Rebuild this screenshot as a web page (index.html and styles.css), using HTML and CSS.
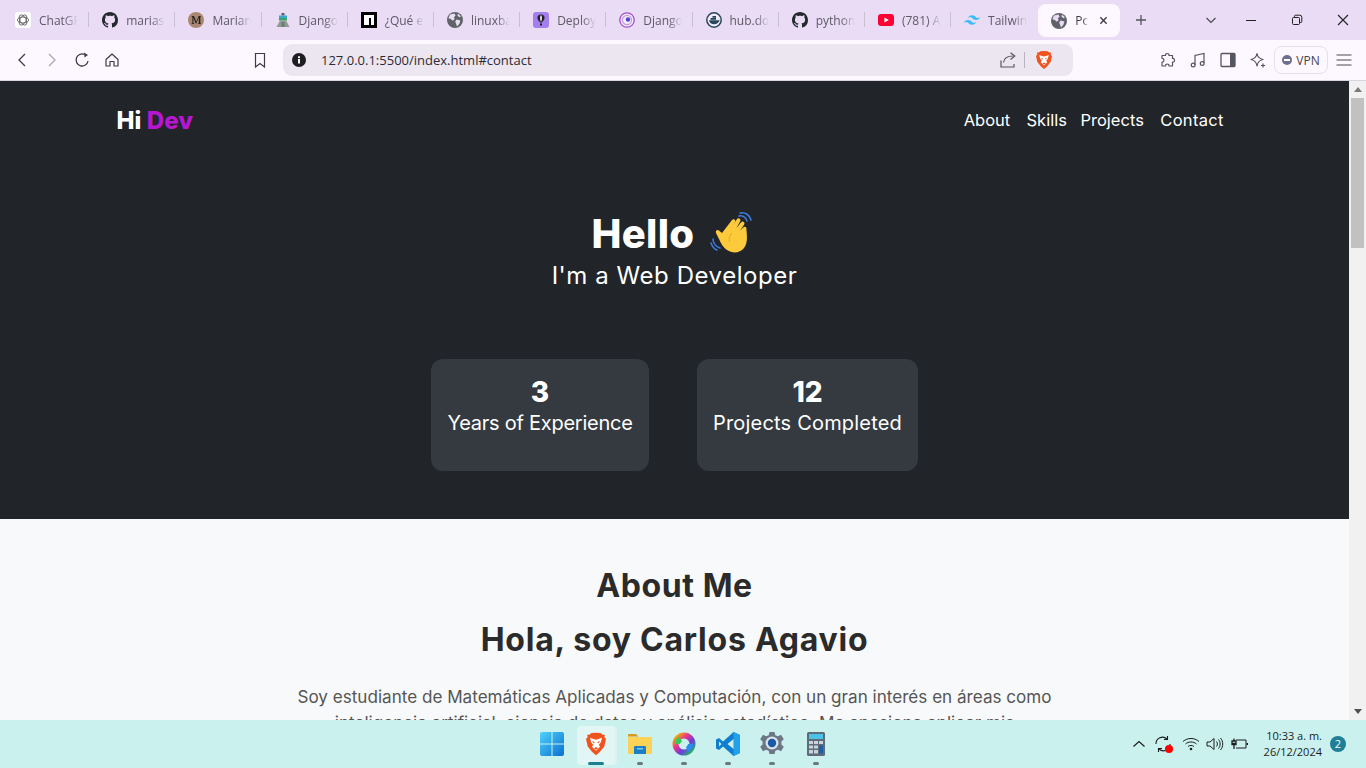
FILE: index.html
```html
<!DOCTYPE html>
<html lang="es">
<head>
<meta charset="utf-8">
<title>Portfolio</title>
<link rel="stylesheet" href="styles.css">
</head>
<body>
<svg class="defs" width="0" height="0" aria-hidden="true">
  <symbol id="gh" viewBox="0 0 16 16"><path d="M8 0C3.58 0 0 3.58 0 8c0 3.54 2.29 6.53 5.47 7.59.4.07.55-.17.55-.38 0-.19-.01-.82-.01-1.49-2.01.37-2.53-.49-2.69-.94-.09-.23-.48-.94-.82-1.13-.28-.15-.68-.52-.01-.53.63-.01 1.08.58 1.23.82.72 1.21 1.87.87 2.33.66.07-.52.28-.87.51-1.07-1.78-.2-3.64-.89-3.64-3.95 0-.87.31-1.59.82-2.15-.08-.2-.36-1.02.08-2.12 0 0 .67-.21 2.2.82.64-.18 1.32-.27 2-.27s1.36.09 2 .27c1.53-1.04 2.2-.82 2.2-.82.44 1.1.16 1.92.08 2.12.51.56.82 1.27.82 2.15 0 3.07-1.87 3.75-3.65 3.95.29.25.54.73.54 1.48 0 1.07-.01 1.93-.01 2.2 0 .21.15.46.55.38A8.01 8.01 0 0 0 16 8c0-4.42-3.58-8-8-8z" fill="#24292f"/></symbol>
  <symbol id="globe" viewBox="0 0 16 16"><circle cx="8" cy="8" r="8" fill="#5f6368"/><path d="M3 2.6 7.4 1.6 8.6 3.6 6.8 5.4 7.8 7 5.8 8.8 3.8 7 1.4 6.2ZM9.6 7.6 13.4 8.4 12.4 11.8 10 14.4 9 11.4 8.2 9.4ZM11 1.6 14 4.4 12.4 5.2 10.4 3.6Z" fill="#e9dcf5"/></symbol>
  <symbol id="brave" viewBox="0 0 16 18"><path d="M8 0 11.6.2 13.4 1.6 15.2 1.6 14.6 3.4 16 5 14.6 11 11 15.4 8 18 5 15.4 1.4 11 0 5 1.4 3.4.8 1.6 2.6 1.6 4.4.2Z" fill="#f1531f"/><path d="M8 5.6 10 5 12.8 4 11.8 7.8 10.2 9.6 11.2 11.2 8 14.4 4.8 11.2 5.8 9.6 4.2 7.8 3.2 4 6 5Z" fill="#fff"/><path d="M6.4 12.4 8 11.4 9.6 12.4 8 13.6ZM4.8 6.6 7 7.4 6.2 8.6ZM11.2 6.6 9 7.4 9.8 8.6Z" fill="#f1531f"/></symbol>
</svg>

<header class="browser">
  <div class="tabstrip">
    <div class="tab tab-first"><svg class="fav" viewBox="0 0 16 16"><rect width="16" height="16" rx="3" fill="#fff"/><g fill="none" stroke="#555" stroke-width=".8"><ellipse cx="8" cy="8" rx="5.6" ry="3"/><ellipse cx="8" cy="8" rx="5.6" ry="3" transform="rotate(60 8 8)"/><ellipse cx="8" cy="8" rx="5.6" ry="3" transform="rotate(120 8 8)"/></g></svg><span class="tab-title">ChatGPT</span></div>
    <div class="tab"><svg class="fav"><use href="#gh"/></svg><span class="tab-title">mariasmith</span></div>
    <div class="tab"><svg class="fav" viewBox="0 0 16 16"><circle cx="8" cy="8" r="8" fill="#a98770"/><path d="M3.600 12h2.600v-.5l-.8-.3V5.600L8 12l2.800-6.600v5.800l-.8.3v.5h3v-.5l-.7-.3V4.800l.7-.3V4h-2.300L8.300 9.500 6 4H3.600v.5l.8.3v6.400l-.8.3z" fill="#222"/></svg><span class="tab-title">Mariana</span></div>
    <div class="tab"><svg class="fav" viewBox="0 0 16 16"><rect x="6.500" y="1" width="3" height="2.500" fill="#5a5f62"/><rect x="4" y="3.500" width="8" height="2.500" fill="#3fa6d0"/><rect x="4" y="6" width="8" height="2.500" fill="#35a36a"/><path d="M5 8.500h6l3.500 6.500h-13Z" fill="#8e9a94"/><rect x="6.500" y="10" width="3" height="5" fill="#6f7a75"/></svg><span class="tab-title">Django</span></div>
    <div class="tab"><svg class="fav" viewBox="0 0 16 16"><rect width="16" height="16" fill="#000"/><path d="M3 3h10v10H10V6H8v7H3Z" fill="#fff"/></svg><span class="tab-title">¿Qué es</span></div>
    <div class="tab"><svg class="fav"><use href="#globe"/></svg><span class="tab-title">linuxbabe</span></div>
    <div class="tab"><svg class="fav" viewBox="0 0 16 16"><rect width="16" height="16" rx="3" fill="#a47ef0"/><path d="M8 2.500c2.400 0 3.600 1.700 3.600 3.300 0 2-2 3.700-2.600 4.700H7c-.6-1-2.600-2.700-2.600-4.700 0-1.600 1.200-3.300 3.600-3.300Z" fill="#222"/><path d="M8 3c.7.8 1 1.800 1 3s-.4 2.500-1 4c-.6-1.500-1-2.800-1-4s.3-2.200 1-3Z" fill="#e9dcf5"/><rect x="7" y="11.500" width="2" height="2" fill="#222"/></svg><span class="tab-title">Deploy</span></div>
    <div class="tab"><svg class="fav" viewBox="0 0 16 16"><circle cx="8" cy="8" r="7.200" fill="#f4eefb" stroke="#a04fd0" stroke-width="1.300"/><circle cx="8" cy="8" r="4.600" fill="none" stroke="#c79be6" stroke-width="1.200"/><circle cx="9" cy="7.500" r="2.200" fill="#5a3fd8"/></svg><span class="tab-title">Django</span></div>
    <div class="tab"><svg class="fav" viewBox="0 0 16 16"><circle cx="8" cy="8" r="7.200" fill="#f2ecfa" stroke="#28475a" stroke-width="1.500"/><path d="M3 8.300h9.500c.6 0 1-.4 1.200-.8-.4 3-2.800 4.800-5.600 4.800-2.600 0-4.700-1.400-5.100-4Z" fill="#28475a"/><rect x="4.500" y="6" width="5.500" height="1.800" fill="#28475a"/><rect x="6.500" y="4" width="3.500" height="1.800" fill="#28475a"/></svg><span class="tab-title">hub.docker</span></div>
    <div class="tab"><svg class="fav"><use href="#gh"/></svg><span class="tab-title">python</span></div>
    <div class="tab"><svg class="fav" viewBox="0 0 16 16"><rect y="2" width="16" height="12" rx="3.200" fill="#ff0033"/><path d="M6.400 5.500 10.800 8l-4.400 2.500Z" fill="#fff"/></svg><span class="tab-title">(781) Anuel</span></div>
    <div class="tab"><svg class="fav" viewBox="0 0 24 24"><path fill="#38bdf8" d="M12 4.800c-3.200 0-5.200 1.600-6 4.800 1.200-1.600 2.600-2.200 4.200-1.800.913.228 1.565.89 2.288 1.624C13.666 10.618 15.027 12 18 12c3.200 0 5.200-1.600 6-4.800-1.200 1.600-2.600 2.200-4.200 1.800-.913-.228-1.565-.89-2.288-1.624C16.337 6.182 14.976 4.800 12 4.800zM6 12c-3.200 0-5.200 1.600-6 4.800 1.200-1.600 2.600-2.200 4.200-1.800.913.228 1.565.89 2.288 1.624 1.177 1.194 2.538 2.576 5.512 2.576 3.200 0 5.200-1.600 6-4.800-1.200 1.600-2.600 2.200-4.200 1.800-.913-.228-1.565-.89-2.288-1.624C10.337 13.382 8.976 12 6 12z"/></svg><span class="tab-title">Tailwind</span></div>
    <div class="tab tab-active"><svg class="fav"><use href="#globe"/></svg><span class="tab-title tab-title-short">Portfolio</span><svg class="tab-close" viewBox="0 0 10 10"><path d="M1.500 1.500l7 7M8.500 1.500l-7 7" stroke="#3c3c44" stroke-width="1.500" fill="none"/></svg></div>
    <svg class="new-tab" viewBox="0 0 12 12"><path d="M6 1v10M1 6h10" stroke="#55555f" stroke-width="1.300" fill="none"/></svg>
    <div class="win-controls">
      <svg class="win-icon chev" viewBox="0 0 12 12"><path d="M1.500 4 6 8.500 10.500 4" stroke="#4a4a52" stroke-width="1.200" fill="none"/></svg>
      <svg class="win-icon win-min" viewBox="0 0 12 12"><path d="M1 6.500h10" stroke="#222" stroke-width="1"/></svg>
      <svg class="win-icon" viewBox="0 0 12 12"><path d="M3.500 3.500V2.200q0-1 1-1h4.300q2 0 2 2v4.300q0 1-1 1H8.500M1.500 4.500q0-1 1-1h5q1 0 1 1v5q0 1-1 1h-5q-1 0-1-1Z" stroke="#222" stroke-width="1" fill="none"/></svg>
      <svg class="win-icon" viewBox="0 0 12 12"><path d="M1 1l10 10M11 1 1 11" stroke="#222" stroke-width="1.100" fill="none"/></svg>
    </div>
  </div>
  <div class="toolbar">
    <svg class="tool back" viewBox="0 0 16 16"><path d="M11 2 5 8l6 6" stroke="#3c3c44" stroke-width="1.300" fill="none"/></svg>
    <svg class="tool fwd" viewBox="0 0 16 16"><path d="M5 2l6 6-6 6" stroke="#a8a6ae" stroke-width="1.300" fill="none"/></svg>
    <svg class="tool reload" viewBox="0 0 16 16"><path d="M14 9A6 6 0 1 1 10.500 2.500" stroke="#3c3c44" stroke-width="1.300" fill="none"/><path d="M10 .5l4 2.500-3.500 2.500Z" fill="#3c3c44"/></svg>
    <svg class="tool home" viewBox="0 0 16 16"><path d="M2 7.500 8 2l6 5.500V14H10V9.500H6V14H2Z" stroke="#3c3c44" stroke-width="1.200" fill="none" stroke-linejoin="round"/></svg>
    <svg class="tool bookmark" viewBox="0 0 16 16"><path d="M3.500 1.500h9V15L8 11.500 3.500 15Z" stroke="#3c3c44" stroke-width="1.200" fill="none"/></svg>
    <div class="address">
      <svg class="info" viewBox="0 0 14 14"><circle cx="7" cy="7" r="7" fill="#1d1d22"/><rect x="6" y="6" width="2" height="4.500" fill="#fff"/><rect x="6" y="3.300" width="2" height="1.800" fill="#fff"/></svg>
      <span class="url">127.0.0.1:5500/index.html#contact</span>
      <svg class="share" viewBox="0 0 16 16"><path d="M1 8.500V15h13v-3M3.500 10.500C4 6 7.500 4 13 4" stroke="#55555f" stroke-width="1.200" fill="none"/><path d="M10.500.8 14.800 4 10.500 7.500" stroke="#55555f" stroke-width="1.200" fill="none"/></svg>
      <span class="addr-sep"></span>
      <svg class="brave-small"><use href="#brave"/></svg>
    </div>
    <svg class="tool ext" viewBox="0 0 16 16"><path d="M5.500 3.500C5 .8 9.500.8 9 3.500h3.500v3c2.700-.5 2.700 4 0 3.500v4H9c.5-2.700-4-2.700-3.500 0H2v-4c2.500.5 2.500-4 0-3.500v-3Z" stroke="#55555f" stroke-width="1.200" fill="none" stroke-linejoin="round"/></svg>
    <svg class="tool music" viewBox="0 0 16 16"><path d="M5 13V3.500L14 1.500V11" stroke="#55555f" stroke-width="1.200" fill="none"/><circle cx="3.200" cy="13" r="1.900" stroke="#55555f" stroke-width="1.200" fill="none"/><circle cx="12.200" cy="11.500" r="1.900" stroke="#55555f" stroke-width="1.200" fill="none"/></svg>
    <svg class="tool panel" viewBox="0 0 16 16"><rect x="1" y="1.500" width="14" height="13" rx="1" stroke="#55555f" stroke-width="1.300" fill="none"/><rect x="10" y="1.500" width="5" height="13" fill="#55555f"/></svg>
    <svg class="tool aria" viewBox="0 0 16 16"><path d="M7 1.500C7.500 5 9 6.500 13 7.500 9 8.500 7.500 10 7 14 6.500 10 5 8.500 1 7.500 5 6.500 6.500 5 7 1.500Z" stroke="#55555f" stroke-width="1.200" fill="none" stroke-linejoin="round"/><path d="M13 11.500v4M11 13.500h4" stroke="#55555f" stroke-width="1.200"/></svg>
    <div class="vpn"><span class="vpn-dot"></span><span>VPN</span></div>
    <svg class="tool menu" viewBox="0 0 16 16"><path d="M.5 3h15M.5 8h15M.5 13h15" stroke="#4a4a52" stroke-width="1.200"/></svg>
  </div>
</header>

<div class="viewport">
  <main class="page">
    <section class="hero">
      <nav class="navbar">
        <a class="logo">Hi <span class="logo-accent">Dev</span></a>
        <ul class="nav-links">
          <li>About</li><li>Skills</li><li>Projects</li><li>Contact</li>
        </ul>
      </nav>
      <div class="intro">
        <h1 class="hello"><span class="hello-text">Hello</span><svg class="wave" viewBox="0 0 44 44"><g fill="none" stroke="#3d7de0" stroke-width="1.500" stroke-linecap="round"><path d="M29 4c3-1 7 1 8 5"/><path d="M30 1c5-1 10 2 11 7"/><path d="M3 27c0 4 3 8 7 9"/><path d="M1 31c1 3 3 6 6 7"/></g><path d="M12 21 22 8c1.500-2 4.500 0 3 2l-3 5 5-8c1.500-2 4.500 0 3.200 2.200l-4 7 5-6c1.500-2 4.200.2 3 2.300l-4 6 3-3c1.500-1.800 4-.2 3.200 1.800C37 24 38 31 34 36c-4 5-11 6-17 2-3-2-6-6-8-11l-3-6c-1-2.400 2-4 3.500-2L12 21Z" fill="#fdca3c"/><path d="M22 21c-3 3-3.500 6-2 9" stroke="#e8a420" stroke-width="1" fill="none"/></svg></h1>
        <p class="tagline">I'm a Web Developer</p>
      </div>
      <div class="stats">
        <div class="stat stat-years"><strong class="stat-value">3</strong><span class="stat-label">Years of Experience</span></div>
        <div class="stat stat-projects"><strong class="stat-value">12</strong><span class="stat-label">Projects Completed</span></div>
      </div>
    </section>
    <section class="about">
      <h2 class="about-title">About Me</h2>
      <h3 class="about-name">Hola, soy Carlos Agavio</h3>
      <p class="about-text">Soy estudiante de Matemáticas Aplicadas y Computación, con un gran interés en áreas como<br>inteligencia artificial, ciencia de datos y análisis estadístico. Me apasiona aplicar mis</p>
    </section>
  </main>
  <div class="scrollbar">
    <span class="sb-arrow sb-up"></span>
    <div class="sb-track"><span class="sb-thumb"></span></div>
    <span class="sb-arrow sb-down"></span>
  </div>
</div>

<footer class="taskbar">
  <div class="task-spacer"></div>
  <div class="task-apps">
    <div class="app"><svg class="app-icon" viewBox="0 0 24 24"><defs><linearGradient id="w" x1="0" y1="0" x2="1" y2="1"><stop offset="0" stop-color="#4fd2fa"/><stop offset="1" stop-color="#0a6fd0"/></linearGradient></defs><path d="M0 2q0-2 2-2h9.500v11.500H0ZM12.500 0H22q2 0 2 2v9.500H12.500ZM0 12.500h11.500V24H2q-2 0-2-2ZM12.500 12.500H24V22q0 2-2 2h-9.500Z" fill="url(#w)"/></svg></div>
    <div class="app app-active"><svg class="app-icon brave-big"><use href="#brave"/></svg><span class="app-line"></span></div>
    <div class="app"><svg class="app-icon" viewBox="0 0 24 24"><path d="M0 3q0-1 1-1h7l2.500 2.500H0Z" fill="#d69a1c"/><path d="M0 5h24v16q0 1-1 1H1q-1 0-1-1Z" fill="#fcd257"/><path d="M7 14h10q1 0 1 1v7H6v-7q0-1 1-1Z" fill="#1a7fc4"/><rect x="9" y="16" width="6" height="1.500" fill="#7cc4ee"/></svg><span class="app-dot"></span></div>
    <div class="app"><svg class="app-icon" viewBox="0 0 24 24"><circle cx="12" cy="12" r="8.500" fill="none" stroke="url(#rb)" stroke-width="6"/><defs><linearGradient id="rb" x1="0" y1="0" x2="1" y2="1"><stop offset="0" stop-color="#f7b500"/><stop offset=".35" stop-color="#e8338c"/><stop offset=".65" stop-color="#6a3fe0"/><stop offset="1" stop-color="#1fbf5a"/></linearGradient></defs><path d="M3 12a9 9 0 0 1 4-7.500l3 5a4 4 0 0 0-2 2.500Z" fill="#2ecc55"/><path d="M21 12a9 9 0 0 1-5 8l-2-5a4 4 0 0 0 2-3Z" fill="#2b8cf0"/></svg><span class="app-dot"></span></div>
    <div class="app"><svg class="app-icon" viewBox="0 0 24 24"><path d="M17.500 0 24 3v18l-6.500 3L7 14.500 3 18l-3-1.500v-9L3 6l4 3.500Z" fill="#0e7fd0"/><path d="M17.500 0 24 3v18l-6.500 3Z" fill="#22a0ea"/><path d="M17.500 7 11.500 12l6 5ZM3 9.500v5L5.500 12Z" fill="#c9f0ee"/></svg><span class="app-dot"></span></div>
    <div class="app"><svg class="app-icon" viewBox="0 0 24 24"><path d="M9.500 0h5l.8 3.200 2.600 1.100L21 2.700l2.800 4.500-2.400 2.200v3.200l2.400 2.200-2.800 4.500-3.100-1.600-2.600 1.100-.8 3.200h-5l-.8-3.200-2.600-1.100L3 19.300.2 14.800l2.400-2.200V9.400L.2 7.200 3 2.700l3.100 1.600 2.600-1.100Z" fill="#6c7684"/><circle cx="12" cy="11" r="6.500" fill="#d8e4ea"/><circle cx="12" cy="11" r="4.200" fill="#1a5aa8"/></svg><span class="app-dot"></span></div>
    <div class="app"><svg class="app-icon" viewBox="0 0 24 24"><rect x="3" width="18" height="24" rx="1.500" fill="#5e6b78"/><rect x="5" y="2" width="14" height="5" fill="#4bc3e8"/><g fill="#c9d2da"><rect x="5" y="9" width="4" height="3"/><rect x="10" y="9" width="4" height="3"/><rect x="15" y="9" width="4" height="3"/><rect x="5" y="13.500" width="4" height="3"/><rect x="10" y="13.500" width="4" height="3"/><rect x="5" y="18" width="4" height="3.500"/><rect x="10" y="18" width="4" height="3.500"/></g><rect x="15" y="13.500" width="4" height="8" fill="#1f5ea8"/></svg><span class="app-dot"></span></div>
  </div>
  <div class="tray">
    <svg class="tray-chevron" viewBox="0 0 14 14"><path d="M1.500 9.500 7 4.500l5.500 5" stroke="#1d1d1d" stroke-width="1.200" fill="none"/></svg>
    <span class="sync">
      <svg class="tray-icon" viewBox="0 0 18 18"><path d="M2 9a6.500 6.500 0 0 1 11-5M16 9a6.500 6.500 0 0 1-11 5" stroke="#1d1d1d" stroke-width="1.100" fill="none"/><path d="M13.500 1v3.500H10M4.500 17v-3.500H8" stroke="#1d1d1d" stroke-width="1.100" fill="none"/></svg>
      <span class="sync-dot"></span>
    </span>
    <svg class="tray-icon wifi" viewBox="0 0 18 18"><g stroke="#1d1d1d" stroke-width="1" fill="none"><path d="M1 6.500c4.500-4 11.500-4 16 0"/><path d="M3.500 9c3-2.700 8-2.700 11 0"/><path d="M6 11.500c1.700-1.400 4.300-1.400 6 0"/></g><circle cx="9" cy="14" r="1.300" fill="#1d1d1d"/></svg>
    <svg class="tray-icon volume" viewBox="0 0 18 18"><path d="M1 7v4h3l4 3.500v-11L4 7Z" stroke="#1d1d1d" stroke-width="1" fill="none"/><path d="M10.500 6.500c1.200 1.500 1.200 3.500 0 5M12.500 4.500c2.200 2.600 2.200 6.400 0 9M14.500 3c3 3.500 3 8.500 0 12" stroke="#1d1d1d" stroke-width="1" fill="none"/></svg>
    <svg class="tray-icon plug" viewBox="0 0 18 18"><path d="M3 3.500v2.500M.5 8.500h5M1 6h4v3.500H1ZM3 9.500V14" stroke="#1d1d1d" stroke-width="1.300" fill="none"/><path d="M5 5h10v8H5" stroke="#1d1d1d" stroke-width="1" fill="none"/><rect x="15.500" y="8" width="1.500" height="2" fill="#1d1d1d"/></svg>
    <div class="clock"><span>10:33 a. m.</span><span>26/12/2024</span></div>
    <span class="badge">2</span>
  </div>
</footer>
</body>
</html>
```
FILE: styles.css
```css
* { box-sizing: border-box; margin: 0; padding: 0; }
html, body { width: 1366px; height: 768px; overflow: hidden; }
body { display: flex; flex-direction: column; font-family: "Inter", "Liberation Sans", sans-serif; background: #fff; }
.defs { position: absolute; }

.browser { flex: none; }
.tabstrip { height: 40px; background: #e9dcf4; display: flex; align-items: center; padding-left: 3px; }
.tab { width: 86.2px; height: 28px; display: flex; align-items: center; padding-left: 13px; position: relative; flex: none; }
.tab-first { padding-left: 12px; }
.tab::after { content: ""; position: absolute; right: 0; top: 6px; height: 15px; width: 1px; background: #c9bfd3; }
.tab:nth-child(12)::after { display: none; }
.fav { width: 16px; height: 16px; flex: none; }
.tab-title { margin-left: 8px; width: 39px; overflow: hidden; white-space: nowrap; font: 12px "Open Sans", sans-serif; color: #5d5a66;
  -webkit-mask-image: linear-gradient(90deg, #000 65%, transparent 100%); mask-image: linear-gradient(90deg, #000 65%, transparent 100%); }
.tab-active { width: 82px; height: 33px; margin-left: 1px; background: #fdf8ff; border-radius: 8px; padding-left: 13px; align-self: flex-end; margin-bottom: 3px; }
.tab-active::after { display: none; }
.tab-title-short { width: 13px; color: #3e3c46; flex: none; margin-right: 11px; }
.tab-close { width: 9px; height: 9px; flex: none; }
.new-tab { width: 12px; height: 12px; margin-left: 15px; flex: none; }
.win-controls { display: flex; align-items: center; margin-left: auto; }
.win-icon { width: 12px; height: 12px; margin-right: 34px; flex: none; }
.win-icon:last-child { margin-right: 17px; }
.win-icon.chev { margin-right: 28px; }
.win-icon.win-min { margin-right: 34px; }

.toolbar { height: 41px; background: #fdf8ff; border-bottom: 1px solid #d9d5de; display: flex; align-items: center; }
.tool { width: 16px; height: 16px; flex: none; }
.back { margin-left: 14px; }
.fwd { margin-left: 14px; }
.reload { margin-left: 14px; }
.home { margin-left: 14px; }
.bookmark { margin-left: 132px; }
.address { width: 790px; height: 32px; margin-left: 15px; background: #ece6f1; border-radius: 9px; display: flex; align-items: center; padding-left: 9px; flex: none; }
.info { width: 14px; height: 14px; flex: none; }
.url { margin-left: 15px; font: 13px "Open Sans", sans-serif; color: #2d2b35; white-space: nowrap; }
.share { width: 16px; height: 16px; margin-left: auto; flex: none; }
.addr-sep { width: 1px; height: 16px; background: #b8b3bf; margin-left: 8px; }
.brave-small { width: 16px; height: 18px; margin-left: 11px; margin-right: 21px; flex: none; }
.ext { margin-left: 87px; }
.music { margin-left: 14px; }
.panel { margin-left: 14px; }
.aria { margin-left: 14px; }
.vpn { width: 54px; height: 28px; margin-left: 8px; border: 1px solid #e4dfe8; border-radius: 8px; display: flex; align-items: center; justify-content: center; gap: 4px; font: 12px "Open Sans", sans-serif; color: #45434d; flex: none; }
.vpn-dot { width: 10px; height: 10px; border-radius: 50%; background: #6c6f8f; position: relative; }
.vpn-dot::after { content: ""; position: absolute; left: 2px; right: 2px; top: 4px; height: 2px; background: #fff; }
.menu { margin-left: 8px; }

.viewport { flex: 1; min-height: 0; display: flex; overflow: hidden; }
.page { flex: 1; min-width: 0; overflow: hidden; background: #f8f9fa; }
.hero { height: 438px; background: #212529; color: #fff; }
.navbar { width: 1116px; margin: 0 auto; height: 78px; display: flex; align-items: center; justify-content: space-between; }
.logo { font-size: 24px; font-weight: 800; color: #fff; letter-spacing: .1px; }
.logo-accent { color: #b916d2; }
.nav-links { display: grid; grid-template-columns: 47px 38px 63px 65px; gap: 16px; list-style: none; padding-right: 8px; font-size: 16.5px; font-weight: 400; white-space: nowrap; text-align: center; }
.nav-links li:last-child { letter-spacing: .3px; }
.intro { margin-top: 51px; text-align: center; }
.hello { font-size: 40px; line-height: 48px; font-weight: 800; display: flex; justify-content: center; align-items: center; gap: 16px; }
.hello-text { letter-spacing: .3px; }
.wave { width: 44px; height: 44px; flex: none; margin-right: 3px; }
.tagline { font-size: 24px; line-height: 36px; font-weight: 400; letter-spacing: .55px; }
.stats { display: flex; justify-content: center; gap: 48px; margin-top: 65px; }
.stat { background: #343a40; border-radius: 12px; height: 112px; padding: 17px 16px 16px; display: flex; flex-direction: column; align-items: center; }
.stat-years { width: 218px; }
.stat-projects { width: 221px; }
.stat-value { font-size: 28px; line-height: 32px; font-weight: 800; }
.stat-label { font-size: 20px; line-height: 30px; font-weight: 400; white-space: nowrap; }
.stat-years .stat-label { letter-spacing: -.25px; }
.stat-projects .stat-label { letter-spacing: .2px; }

.about { text-align: center; color: #2b2b2b; padding-top: 48px; }
.about-title { font-size: 32px; line-height: 38px; font-weight: 700; letter-spacing: .6px; }
.about-name { font-size: 32px; line-height: 38px; font-weight: 700; margin-top: 16px; letter-spacing: .75px; }
.about-text { font-size: 17.1px; line-height: 25.5px; color: #555; margin-top: 25px; }

.scrollbar { width: 17px; flex: none; background: #f1f1f1; display: flex; flex-direction: column; }
.sb-arrow { height: 17px; flex: none; position: relative; }
.sb-arrow::after { content: ""; position: absolute; left: 4.500px; width: 0; height: 0; border-left: 4px solid transparent; border-right: 4px solid transparent; }
.sb-up::after { top: 6px; border-bottom: 5px solid #7a7a7a; }
.sb-down::after { top: 6px; border-top: 5px solid #505050; }
.sb-track { flex: 1; padding: 0 2px; }
.sb-thumb { display: block; height: 150px; background: #c1c1c1; }

.taskbar { height: 48px; flex: none; background: #caf1ee; display: grid; grid-template-columns: 1fr auto 1fr; align-items: center; padding-left: 2px; }
.task-apps { display: flex; }
.app { width: 44px; height: 44px; display: flex; align-items: center; justify-content: center; position: relative; }
.app-active::before { content: ""; position: absolute; left: 3px; top: 4px; width: 38px; height: 39px; border-radius: 4px; background: #e2f6f5; box-shadow: 2px 0 0 #d8f3f1; }
.app-icon { width: 24px; height: 24px; position: relative; }
.brave-big { width: 20px; height: 24px; }
.app-dot { position: absolute; bottom: 1px; left: 19px; width: 6px; height: 3px; border-radius: 2px; background: #6a7a7c; }
.app-line { position: absolute; bottom: 1px; left: 14px; width: 16px; height: 3px; border-radius: 2px; background: #1d7f8f; }
.tray { display: flex; align-items: center; justify-content: flex-end; padding-right: 20px; }
.tray-chevron { width: 14px; height: 14px; flex: none; margin-right: 8px; }
.tray-icon { width: 18px; height: 18px; flex: none; display: block; }
.sync { position: relative; margin-right: 10px; }
.sync-dot { position: absolute; right: -1px; bottom: 0; width: 8px; height: 8px; border-radius: 50%; background: #f00; }
.wifi { margin-right: 6px; }
.volume { margin-right: 7px; }
.plug { margin-right: 13px; }
.clock { width: 60px; display: flex; flex-direction: column; align-items: flex-end; font: 11px/16px "Open Sans", sans-serif; color: #1d1d1d; margin-right: 8px; white-space: nowrap; }
.badge { width: 16px; height: 16px; border-radius: 50%; background: #1f7f97; color: #fff; font: 11px/16px "Open Sans", sans-serif; text-align: center; }
```
